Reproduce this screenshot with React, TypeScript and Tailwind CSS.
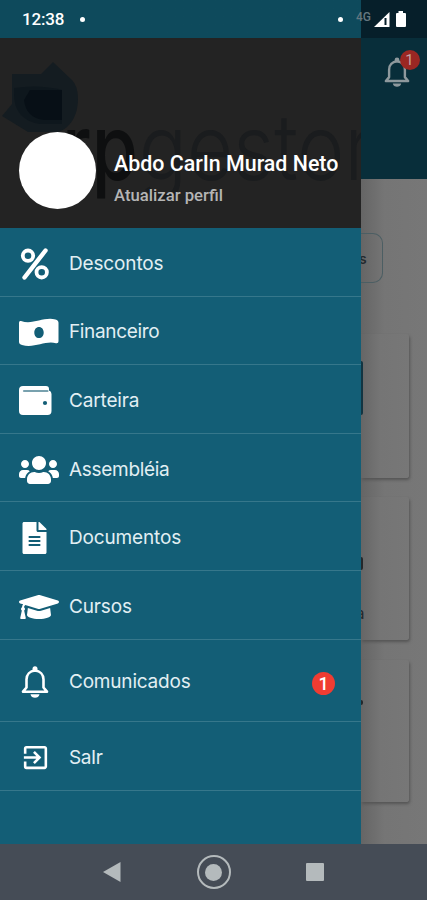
import React from "react";
import { FaUsers, FaFileAlt, FaGraduationCap } from "react-icons/fa";
import { MdExitToApp } from "react-icons/md";

function Percent() {
  return (
    <svg width="30" height="34" viewBox="0 0 30 34" fill="none" stroke="currentColor">
      <path d="M25.500 3.5 4.500 30.5" strokeWidth="4.400" strokeLinecap="round" />
      <circle cx="8" cy="8.7" r="5.200" strokeWidth="3.800" />
      <circle cx="21.7" cy="25.3" r="5.200" strokeWidth="3.800" />
    </svg>
  );
}

function Bill() {
  return (
    <svg width="40" height="29" viewBox="0 0 40 30" preserveAspectRatio="none">
      <path fillRule="evenodd" fill="currentColor" d="M2 3.2C14 7.500 24-1.500 36.500 1.500Q39.500 2.200 39.500 5V24Q39.500 26.500 37 26C26 23 16 31.500 3 28Q0 27.200 0 25V5Q0 2.500 2 3.200ZM20 9.200C17.200 9.200 15.300 11.700 15.300 15S17.200 20.800 20 20.800 24.700 18.300 24.700 15 22.800 9.200 20 9.200Z" />
    </svg>
  );
}

function Wallet() {
  return (
    <svg width="33" height="29" viewBox="0 0 33 29">
      <path fill="currentColor" d="M4 0H27Q30 0 30 3V4.500Q32.500 5.200 32.500 8V25Q32.500 29 28.500 29H4Q0 29 0 25V4Q0 0 4 0Z" />
      <path d="M5 5H28.500" stroke="#78a1ae" strokeWidth="2.200" strokeLinecap="round" />
      <circle cx="26" cy="17" r="2.100" fill="#135e76" />
    </svg>
  );
}

function Bell({ className }: { className: string }) {
  return (
    <svg className={className} viewBox="0 0 28 32" fill="none">
      <path d="M2 25.700H26L22.500 21.500V13.500C22.500 8.500 19 5 14 4.500 9 5 5.500 8.500 5.500 13.500V21.500Z" stroke="currentColor" strokeWidth="2.600" strokeLinejoin="round" />
      <path d="M11.500 4.500V2.800A2.500 2.500 0 0 1 16.500 2.800V4.500Z" fill="currentColor" />
      <path d="M9.500 28.300H18.500C18 33 10 33 9.500 28.300Z" fill="currentColor" />
    </svg>
  );
}

type ItemProps = { icon: React.ReactNode; label: string; tracking?: string; tall?: boolean; badge?: string };

function Item({ icon, label, tracking = "tracking-[-0.15px]", tall, badge }: ItemProps) {
  return (
    <li className={`flex shrink-0 items-center border-b border-[#36778b] pt-[4px] pl-[19px] text-white ${tall ? "h-[82.4px]" : "h-[68.6px]"}`}>
      <span className="flex w-[50px] items-center">{icon}</span>
      <span className={`text-[19px] leading-[28px] text-[#e2eff3] ${tracking}`}>{label}</span>
      {badge && (
        <span className="mt-[2px] mr-[26px] ml-auto flex size-[23px] items-center justify-center rounded-full bg-[#f03c32] font-['Roboto'] text-[18px] font-medium">{badge}</span>
      )}
    </li>
  );
}

function Logo() {
  return (
    <svg className="absolute inset-0" width="361" height="190" viewBox="0 0 361 190">
      <path d="M12 36H41L53 24 72 42Q78 48 78 61C78 82 66 92 58 94H28L2 78 12 66Z" fill="#141c21" />
      <path d="M14 50Q40 46 62 52V86H40Q14 82 14 56Z" fill="#0e171d" />
      <path d="M30 52H62V82H44Q26 80 24 62Z" fill="#070f16" />
      <g fontFamily="Inter, sans-serif" fontSize="91">
        <text x="62" y="142" fontWeight="500" fill="#0e0f10" textLength="76" lengthAdjust="spacingAndGlyphs">rp</text>
        <text x="139" y="142" fontWeight="300" fill="#1a1c1e" textLength="234" lengthAdjust="spacingAndGlyphs">gestor</text>
      </g>
    </svg>
  );
}

function StatusBar() {
  return (
    <header className="flex h-[38px] shrink-0 items-center bg-linear-to-r from-[#0e4a5c] from-[361px] to-[#061f2a] to-[361px] pl-[22px] font-['Roboto'] text-white">
      <span className="mt-[2px] text-[17px] font-medium tracking-[-0.2px]">12:38</span>
      <span className="ml-[16px] size-[5px] rounded-full bg-white" />
      <span className="mr-[13px] ml-auto size-[5px] rounded-full bg-white" />
      <span className="-mt-[5px] text-[12px] font-medium text-[#647780]">4G</span>
      <svg className="mt-px mr-[20px] ml-[3px]" width="33" height="17" viewBox="0 0 33 17">
        <path d="M0 16 15.500 1V16Z" fill="white" />
        <path d="M11.500 7V14" stroke="#061f2a" strokeWidth="2" />
        <path d="M22 3Q22 2 23 2H24.500V0H29V2H31Q32 2 32 3V15Q32 16 31 16H23Q22 16 22 15Z" fill="white" />
      </svg>
    </header>
  );
}

function Drawer() {
  return (
    <aside className="flex w-[361px] shrink-0 flex-col bg-[#135e76]">
      <div className="relative flex h-[190px] shrink-0 items-start overflow-hidden bg-[#232323] pl-[19px] font-['Roboto']">
        <Logo />
        <div className="relative mt-[94px] size-[77px] shrink-0 rounded-full bg-white" />
        <div className="relative mt-[113px] ml-[18px] whitespace-nowrap">
          <div className="text-[21.400px] leading-[26px] font-medium text-white">Abdo CarIn Murad Neto</div>
          <div className="mt-[7px] text-[16.700px] leading-[23px] font-medium text-[#b5b5b5]">Atualizar perfil</div>
        </div>
      </div>
      <ul className="flex flex-col">
        <Item icon={<span className="ml-px"><Percent /></span>} label="Descontos" />
        <Item icon={<Bill />} label="Financeiro" tracking="tracking-[-0.35px]" />
        <Item icon={<Wallet />} label="Carteira" />
        <Item icon={<FaUsers className="h-[32px] w-[40px]" />} label="Assembléia" tracking="tracking-[-0.3px]" />
        <Item icon={<FaFileAlt className="ml-[3px] h-[32px] w-[25px]" />} label="Documentos" />
        <Item icon={<FaGraduationCap className="h-[32px] w-[40px]" />} label="Cursos" />
        <Item icon={<Bell className="ml-[2px] h-[32px] w-[28px]" />} label="Comunicados" tracking="tracking-[-0.2px]" tall badge="1" />
        <Item icon={<MdExitToApp className="mb-px ml-px size-[31px]" />} label="SaIr" tracking="tracking-[-0.4px]" />
      </ul>
    </aside>
  );
}

function Card({ className, children }: { className: string; children?: React.ReactNode }) {
  return (
    <div className={`mr-[18px] flex flex-col items-start rounded-r-[3px] bg-linear-to-r from-[#666666] via-[#757575] via-40% to-[#777777] text-[#25282b] shadow-[1px_2px_3px_#555555] ${className}`}>{children}</div>
  );
}

function Behind() {
  return (
    <main className="flex min-w-0 flex-1 flex-col overflow-hidden bg-[#777777]">
      <div className="flex h-[141px] shrink-0 justify-center bg-[#082e3a] text-[#8e999d]">
        <div className="relative mt-[19px] ml-[5px] h-[30px] w-[26px]">
          <Bell className="h-[30px] w-[26px]" />
          <span className="absolute -top-[7px] left-[16px] flex size-[20px] items-center justify-center rounded-full bg-[#9b2723] font-['Roboto'] text-[15px] text-[#c4a3a2]">1</span>
        </div>
      </div>
      <div className="flex flex-1 flex-col bg-linear-to-r from-[#656565] via-[#757575] via-35% to-[#777777]">
        <div className="mt-[54px] flex h-[50px] w-[22px] shrink-0 items-center rounded-r-[10px] border border-l-0 border-[#4c5e63]">
          <span className="-ml-[2px] font-['Inter'] text-[14px] font-semibold text-[#242a2d]">s</span>
        </div>
        <Card className="mt-[51px] h-[144px] pt-[27px]">
          <span className="h-[54px] w-[2px] rounded-r bg-[#123542]" />
        </Card>
        <Card className="mt-[19px] h-[143px] pt-[60px]">
          <span className="h-[13px] w-[2px] rounded-r bg-[#24282b]" />
          <span className="mt-[34px] -ml-[5px] font-['Inter'] text-[15px] leading-[20px]">a</span>
        </Card>
        <Card className="mt-[20px] h-[142px] pt-[40px]">
          <span className="h-[5px] w-[2px] rounded-r bg-[#24282b]" />
        </Card>
      </div>
    </main>
  );
}

export default function App() {
  return (
    <div className="flex h-[900px] w-[427px] flex-col overflow-hidden font-['Inter',sans-serif]">
      <StatusBar />
      <div className="flex h-[806px] shrink-0">
        <Drawer />
        <Behind />
      </div>
      <nav className="flex flex-1 items-center justify-between bg-[#454c56] pr-[103px] pl-[103px]">
        <svg width="18" height="20" viewBox="0 0 18 20"><path d="M0 10 17.500 0V20Z" fill="#b4babc" /></svg>
        <span className="flex size-[34px] items-center justify-center rounded-full border-2 border-[#b4babc]"><span className="size-[17px] rounded-full bg-[#b4babc]" /></span>
        <span className="size-[18px] rounded-[1px] bg-[#b4babc]" />
      </nav>
    </div>
  );
}
